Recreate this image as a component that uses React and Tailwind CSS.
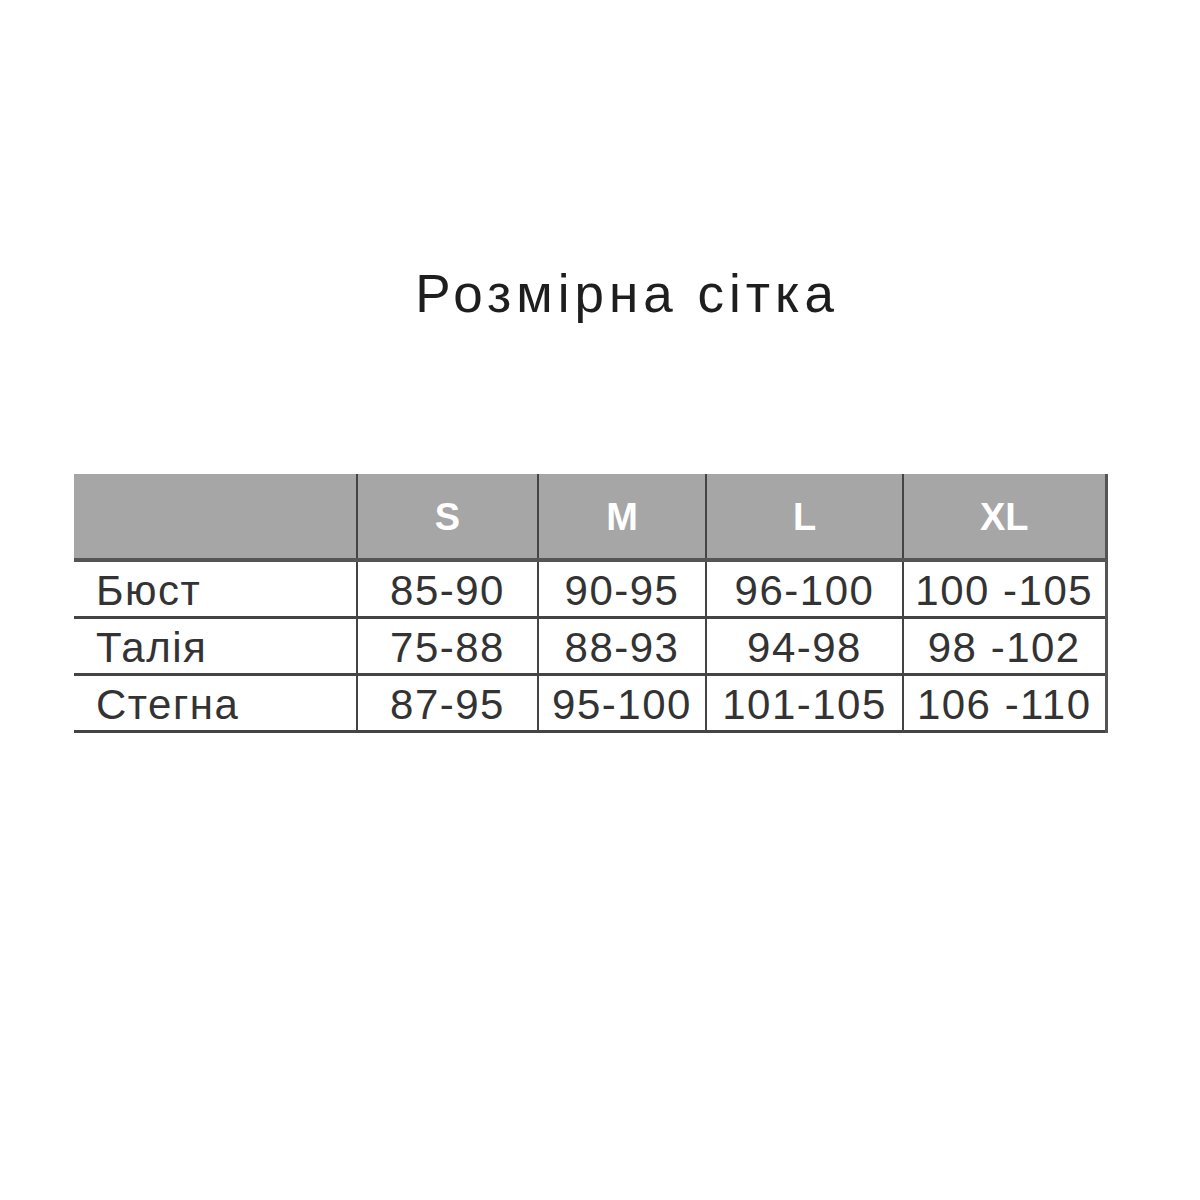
const sizes = ["S", "M", "L", "XL"];

const rows = [
  { name: "Бюст", values: ["85-90", "90-95", "96-100", "100 -105"] },
  { name: "Талія", values: ["75-88", "88-93", "94-98", "98 -102"] },
  { name: "Стегна", values: ["87-95", "95-100", "101-105", "106 -110"] },
];

const widths = ["w-[283px]", "w-[181px]", "w-[168px]", "w-[197px]", "w-[203px]"];

export default function App() {
  return (
    <div className="w-[1200px] h-[1200px] bg-white font-['Liberation_Sans',Arial,sans-serif] text-[#333]">
      <div className="pt-[264px] pl-[54px] text-center">
        <h1 className="text-[53px] leading-[60px] text-[#1e1e1e] tracking-[5px]">Розмірна сітка</h1>
      </div>

      <div className="pt-[150px] pl-[74px]">
        <table className="border-collapse table-fixed">
          <colgroup>
            {widths.map((w, i) => (
              <col key={i} className={w} />
            ))}
          </colgroup>
          <thead>
            <tr className="h-[86px] bg-[#a6a6a6] border-b-4 border-[#555]">
              <th className="border-r-2 border-[#444]"></th>
              {sizes.map((s, i) => (
                <th
                  key={s}
                  className={
                    "text-white text-[38px] font-bold text-center pt-[2px] " +
                    (i === sizes.length - 1 ? "border-r-[3px] border-[#555]" : "border-r-2 border-[#444]")
                  }
                >
                  {s}
                </th>
              ))}
            </tr>
          </thead>
          <tbody>
            {rows.map((row) => (
              <tr key={row.name} className="h-[56px] border-b-[3px] border-[#444]">
                <td className="pl-[22px] text-[42px] tracking-[1.5px] leading-[50px] pt-[4px] border-r-2 border-[#444] text-left">
                  {row.name}
                </td>
                {row.values.map((v, i) => (
                  <td
                    key={i}
                    className={
                      "text-center text-[42px] tracking-[1.5px] leading-[50px] pt-[4px] whitespace-nowrap " +
                      (i === row.values.length - 1 ? "border-r-[3px] border-[#555]" : "border-r-2 border-[#444]")
                    }
                  >
                    {v}
                  </td>
                ))}
              </tr>
            ))}
          </tbody>
        </table>
      </div>
    </div>
  );
}
